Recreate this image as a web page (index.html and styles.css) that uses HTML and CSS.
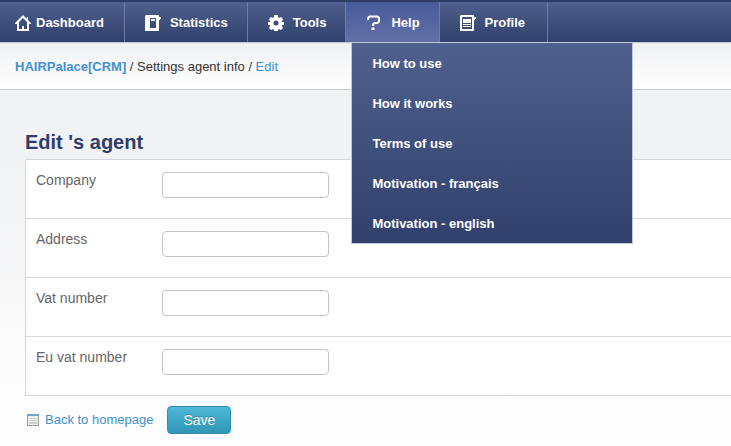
FILE: index.html
```html
<!DOCTYPE html>
<html lang="en">
<head>
    <meta charset="UTF-8">
    <meta name="viewport" content="width=device-width, initial-scale=1.0">
    <title>HAIRPalace[CRM]</title>
    <link rel="stylesheet" href="styles.css">
</head>
<body>
    <!-- Main menu -->
    <nav class="navbar">
        <ul class="menu">
            <li class="menu-item home">
                <a href="#">
                    <svg class="icon" viewBox="0 0 16 16"><path d="M8 0L0 8v1h2v7h12V9h2V8L13 5V2h-1v2zM8 3l4 4v7H9v-3H7v3H4V7z" fill="currentColor" fill-rule="evenodd"/></svg>
                    Dashboard
                </a>
            </li>
            <li class="menu-item">
                <a href="#">
                    <svg class="icon" viewBox="0 0 16 16"><path d="M1 0h13v2h2v2h-1v1h-1v11H0V1zM5 3v10h6V3zM6 4h4v2H6z" fill="currentColor" fill-rule="evenodd"/></svg>
                    Statistics
                </a>
            </li>
            <li class="menu-item">
                <a href="#">
                    <svg class="icon" viewBox="0 0 16 16"><path d="M6 0h4v2l1 1 2-1 2 2-1 2v1h2v3h-2v1l1 2-2 2-2-1-1 1v1H6v-1l-1-1-2 1-2-2 1-2v-1H0V7h2V6L1 4l2-2 2 1 1-1zM8 5.500a2.500 2.500 0 1 0 0 5 2.500 2.500 0 0 0 0-5z" fill="currentColor" fill-rule="evenodd"/></svg>
                    Tools
                </a>
            </li>
            <li class="menu-item active">
                <a href="#">
                    <svg class="icon" viewBox="0 0 16 16"><path d="M2 5V3l1.500-1.500h8L13 3v3.500L11.500 8H8.500L7 9.500V11" fill="none" stroke="currentColor" stroke-width="2"/><path d="M5.500 12.500h3v2.500h-3z" fill="currentColor"/></svg>
                    Help
                </a>
                <ul class="dropdown">
                    <li><a href="#">How to use</a></li>
                    <li><a href="#">How it works</a></li>
                    <li><a href="#">Terms of use</a></li>
                    <li><a href="#">Motivation - français</a></li>
                    <li><a href="#">Motivation - english</a></li>
                </ul>
            </li>
            <li class="menu-item">
                <a href="#">
                    <svg class="icon" viewBox="0 0 16 16"><path d="M1 0h13v2h2v2h-1v1h-1v11H0V1zM2 2v12h10V2z" fill="currentColor" fill-rule="evenodd"/><path d="M3 4h8v4H3zM3 9h8v1H3zM3 11h8v1H3z" fill="currentColor"/></svg>
                    Profile
                </a>
            </li>
        </ul>
    </nav>

    <!-- Breadcrumb -->
    <div class="breadcrumb">
        <a href="#" class="brand">HAIRPalace[CRM]</a> / Settings agent info / <a href="#">Edit</a>
    </div>

    <main class="content">
        <h1>Edit 's agent</h1>
        <form>
            <div class="fields">
                <div class="field">
                    <label for="company">Company</label>
                    <input type="text" id="company">
                </div>
                <div class="field">
                    <label for="address">Address</label>
                    <input type="text" id="address">
                </div>
                <div class="field">
                    <label for="vat">Vat number</label>
                    <input type="text" id="vat">
                </div>
                <div class="field">
                    <label for="eu-vat">Eu vat number</label>
                    <input type="text" id="eu-vat">
                </div>
            </div>
            <div class="actions">
                <a href="#" class="back">
                    <svg class="list-icon" viewBox="0 0 12 12"><path d="M0 0h12v12H0z" fill="#9a9a9a"/><path d="M0 0h12v2H0z" fill="#6fa5c4"/><path d="M1 2h10v9H1z" fill="#f0f0f0"/><path d="M2 4h8v1H2zM2 6h8v1H2zM2 8h8v2H2z" fill="#ccc"/></svg>
                    Back to homepage
                </a>
                <button type="submit" class="save">Save</button>
            </div>
        </form>
    </main>
</body>
</html>
```
FILE: styles.css
```css
* {
    box-sizing: border-box;
}

html {
    min-height: 100%;
    background: linear-gradient(#f1f2f4 90px, #f2f3f5 160px, #fdfdfd 400px);
}

body {
    margin: 0;
    font-family: "Liberation Sans", Arial, sans-serif;
    font-size: 14px;
    line-height: 20px;
    color: #666;
}

a {
    color: #4390d0;
    text-decoration: none;
}

ul {
    margin: 0;
    padding: 0;
    list-style: none;
}

/* menu */
.navbar {
    border-top: 2px solid #2d3b67;
    border-bottom: 1px solid #c0c8db;
    background: linear-gradient(#4f608e, #31406c);
}

.menu {
    display: flex;
}

.menu-item {
    position: relative;
    border-right: 1px solid #6f7ca4;
}

.menu-item > a {
    display: flex;
    align-items: center;
    gap: 9px;
    height: 40px;
    padding: 1px 19px 0 20px;
}

.menu-item.home > a {
    gap: 5px;
    padding-left: 15px;
    padding-right: 20px;
}

.menu-item:last-child > a {
    padding-right: 22px;
}

.menu a {
    color: #fff;
    font-size: 13px;
    font-weight: bold;
}

.active > a {
    background: linear-gradient(#475b99, #6270a6);
}

.icon {
    width: 16px;
    height: 16px;
}

.dropdown {
    position: absolute;
    top: 100%;
    left: 5px;
    z-index: 10;
    width: 282px;
    border: 1px solid #c0c8db;
    background: linear-gradient(#4f608e, #31406c);
}

.dropdown a {
    display: block;
    padding: 11px 20px 9px;
}

/* breadcrumb */
.breadcrumb {
    padding: 14px 15px 12px;
    border-bottom: 1px solid #c9c9cb;
    background: linear-gradient(#f0f1f3, #fff);
    color: #333;
    font-size: 13px;
}

.brand {
    font-weight: bold;
}

/* form */
.content {
    padding: 39px 0 12px 25px;
}

h1 {
    margin: 0 0 4px;
    color: #2f3d6a;
    font-size: 20px;
    line-height: 26px;
}

.fields {
    border: 1px solid #d5d7d9;
    border-width: 1px 0 0 1px;
    background: #fff;
}

.field {
    display: grid;
    grid-template-columns: 116px 167px;
    align-items: start;
    gap: 10px;
    padding: 12px 10px 20px;
    border-bottom: 1px solid #d5d7d9;
}

.field label {
    line-height: 16px;
}

.field input {
    height: 26px;
    padding: 2px 6px;
    border: 1px solid #c4c4c4;
    border-radius: 4px;
    background: #fff;
    font: inherit;
}

.actions {
    display: flex;
    align-items: center;
    gap: 14px;
    padding: 10px 2px;
}

.back {
    display: flex;
    align-items: center;
    gap: 6px;
    font-size: 13px;
}

.list-icon {
    width: 12px;
    height: 12px;
}

.save {
    height: 28px;
    padding: 0 15px;
    border: 1px solid #2f8cab;
    border-radius: 4px;
    background: linear-gradient(#50b9d8, #2f96b4);
    color: #fff;
    font: inherit;
    text-shadow: 0 -1px 0 rgba(0, 0, 0, 0.25);
}
```
